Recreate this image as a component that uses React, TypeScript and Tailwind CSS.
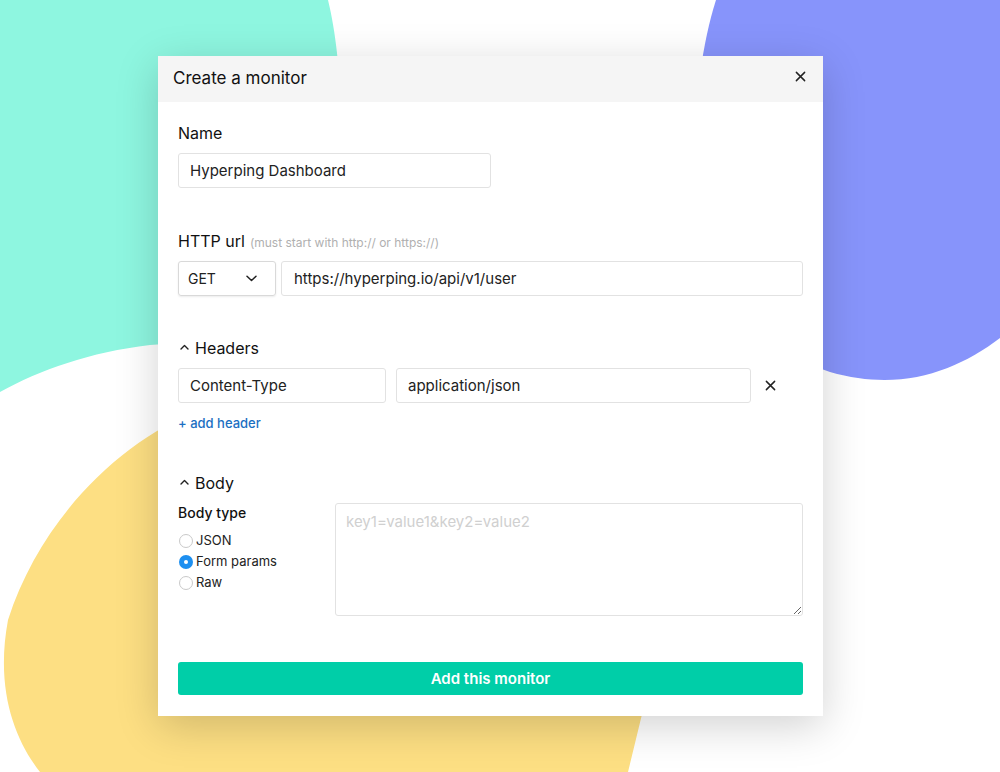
import React from 'react';

const font = { fontFamily: 'Inter, "Noto Sans", sans-serif' };

// background blobs drawn behind the modal
const Blobs = () => (
  <svg className="absolute inset-0" width="1000" height="772" viewBox="0 0 1000 772">
    <path d="M0,0 L328,0 C345,70 350,200 310,290 C280,340 220,340 150,345 C90,352 40,370 0,392 Z" fill="#8ef6e0" />
    <path d="M716,0 L1000,0 L1000,338 C955,372 900,392 830,372 C760,350 700,300 695,200 C692,120 700,50 716,0 Z" fill="#8794fb" />
    <path d="M200,410 C120,440 40,520 8,620 C-5,690 15,740 40,772 L628,772 L660,640 C700,520 500,420 200,410 Z" fill="#fddf83" />
  </svg>
);

const X = ({ size = 12 }: { size?: number }) => (
  <svg width={size} height={size} viewBox="0 0 12 12" fill="none" stroke="#222" strokeWidth="1.6" strokeLinecap="round">
    <path d="M1.5 1.5 L10.5 10.5 M10.5 1.5 L1.5 10.5" />
  </svg>
);

const Caret = () => (
  <svg width="9" height="6" viewBox="0 0 9 6" fill="none" stroke="#222" strokeWidth="1.4" strokeLinecap="round" strokeLinejoin="round">
    <path d="M1 5 L4.5 1.5 L8 5" />
  </svg>
);

const Radio = ({ label, checked }: { label: string; checked?: boolean }) => (
  <label className="flex items-center h-[21px] gap-[3px] text-[13px] text-[#222]">
    {checked ? (
      <span className="w-[14px] h-[14px] rounded-full bg-[#1d8ff0] flex items-center justify-center">
        <span className="w-[4px] h-[4px] rounded-full bg-white" />
      </span>
    ) : (
      <span className="w-[14px] h-[14px] rounded-full border border-[#c9c9c9] bg-white" />
    )}
    {label}
  </label>
);

const inputCls =
  'h-[35px] border border-[#e2e2e2] rounded-[3px] bg-white text-[15px] text-[#222] outline-none';

export default function App() {
  return (
    <div className="relative w-[1000px] h-[772px] overflow-hidden bg-white" style={font}>
      <Blobs />
      <div className="relative pt-[56px] pl-[158px]">
        <div className="w-[665px] bg-white shadow-[0_10px_40px_rgba(0,0,0,0.18)]">
          <div className="h-[46px] bg-[#f5f5f5] flex items-center justify-between pl-[15px] pr-[17px]">
            <h2 className="text-[17px] text-[#111]">Create a monitor</h2>
            <span className="-mt-[5px]"><X size={11} /></span>
          </div>

          <div className="px-[20px] pt-[21px] pb-[21px]">
            <div className="text-[16px] leading-[20px] text-[#111]">Name</div>
            <input readOnly defaultValue="Hyperping Dashboard" className={`${inputCls} mt-[10px] w-[313px] pl-[11px]`} />

            <div className="mt-[43px] flex items-baseline gap-[5px] leading-[20px]">
              <span className="text-[16px] text-[#111]">HTTP url</span>
              <span className="text-[12px] text-[#b0b0b0]">(must start with http:// or https://)</span>
            </div>
            <div className="mt-[8px] flex gap-[5px]">
              <div className="h-[35px] w-[98px] border border-[#d9d9d9] rounded-[3px] shadow-[0_1px_2px_rgba(0,0,0,0.08)] flex items-center justify-between pl-[9px] pr-[18px] text-[14px] text-[#222]">
                GET
                <svg width="11" height="7" viewBox="0 0 11 7" fill="none" stroke="#222" strokeWidth="1.5" strokeLinecap="round" strokeLinejoin="round">
                  <path d="M1 1.2 L5.5 5.5 L10 1.2" />
                </svg>
              </div>
              <input readOnly defaultValue="https://hyperping.io/api/v1/user" className={`${inputCls} flex-1 pl-[12px]`} />
            </div>

            <div className="mt-[42px] flex items-center gap-[6px] leading-[20px]">
              <span className="pl-[2px] -mt-[2px]"><Caret /></span>
              <span className="text-[16px] text-[#111]">Headers</span>
            </div>
            <div className="mt-[10px] flex items-center">
              <input readOnly defaultValue="Content-Type" className={`${inputCls} w-[208px] pl-[11px]`} />
              <input readOnly defaultValue="application/json" className={`${inputCls} ml-[10px] w-[355px] pl-[11px]`} />
              <span className="ml-[14px]"><X size={11} /></span>
            </div>
            <div className="mt-[12px] leading-[16px] text-[13px] font-medium text-[#1b6fc2]">+ add header</div>

            <div className="mt-[42px] flex items-center gap-[6px] leading-[20px]">
              <span className="pl-[2px] -mt-[2px]"><Caret /></span>
              <span className="text-[16px] text-[#111]">Body</span>
            </div>
            <div className="mt-[10px] flex">
              <div className="w-[157px]">
                <div className="text-[14px] leading-[20px] font-medium text-[#111]">Body type</div>
                <div className="mt-[7px] pl-[1px]">
                  <Radio label="JSON" />
                  <Radio label="Form params" checked />
                  <Radio label="Raw" />
                </div>
              </div>
              <textarea
                readOnly
                placeholder="key1=value1&key2=value2"
                className="flex-1 h-[113px] border border-[#e2e2e2] rounded-[3px] px-[10px] pt-[7px] text-[15px] text-[#222] placeholder:text-[#d0d0d0] outline-none"
              />
            </div>

            <button className="mt-[46px] w-full h-[33px] pt-[2px] rounded-[3px] bg-[#00cea8] text-white text-[15px] font-semibold">
              Add this monitor
            </button>
          </div>
        </div>
      </div>
    </div>
  );
}
